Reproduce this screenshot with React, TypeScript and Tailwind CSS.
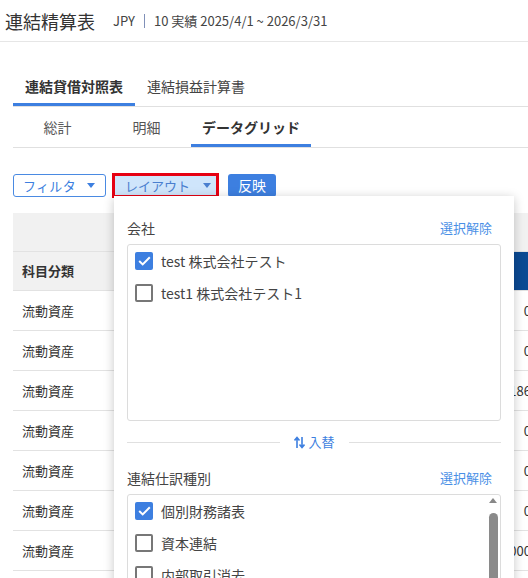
import React from "react";

const Caret = ({ color, ml }: { color: string; ml: string }) => (
  <svg width="8" height="5" viewBox="0 0 8 5" className={ml}>
    <path d="M0 0 L8 0 L4 5 Z" fill={color} />
  </svg>
);

const Check = ({ checked }: { checked: boolean }) =>
  checked ? (
    <div className="w-[18px] h-[18px] rounded-[2px] bg-[#3d7fe0] flex items-center justify-center shrink-0">
      <svg width="13" height="10" viewBox="0 0 13 10">
        <path d="M1.2 5 L4.7 8.4 L11.8 1.3" stroke="#fff" strokeWidth="2" fill="none" />
      </svg>
    </div>
  ) : (
    <div className="w-[18px] h-[18px] rounded-[2px] border-2 border-[#777] shrink-0" />
  );

const Item = ({ checked, label }: { checked: boolean; label: string }) => (
  <div className="flex items-center h-[32px] gap-[8px]">
    <Check checked={checked} />
    <span className="text-[14px] text-[#444]">{label}</span>
  </div>
);

const rows = ["0", "0", "2,186", "0", "0", "0", "10,000"];

export default function App() {
  return (
    <div className="relative w-[528px] h-[578px] overflow-hidden bg-white font-['Noto_Sans_CJK_JP','Noto_Sans',sans-serif] text-[#333]">
      {/* header */}
      <div className="h-[42px] flex items-center pl-[5px] border-b border-[#e6e6e6]">
        <span className="text-[18px] text-[#333] leading-none">連結精算表</span>
        <span className="ml-[18px] text-[13px] text-[#444]">JPY</span>
        <span className="mx-[9px] w-px h-[14px] bg-[#8090b8]" />
        <span className="text-[13px] text-[#444]">10 実績 2025/4/1 ~ 2026/3/31</span>
      </div>

      <div className="pl-[13px]">
        {/* main tabs */}
        <div className="mt-[24px] flex border-b border-[#e0e0e0]">
          <div className="h-[40px] px-[12px] flex items-center text-[14px] font-bold text-[#333] shadow-[inset_0_-3px_0_#3d7fe0]">
            連結貸借対照表
          </div>
          <div className="h-[40px] px-[12px] flex items-center text-[14px] text-[#444]">
            連結損益計算書
          </div>
        </div>
        {/* sub tabs */}
        <div className="flex border-b border-[#e0e0e0]">
          <div className="h-[40px] w-[89px] flex items-center justify-center text-[14px] text-[#555]">総計</div>
          <div className="h-[40px] w-[89px] flex items-center justify-center text-[14px] text-[#555]">明細</div>
          <div className="h-[40px] w-[120px] flex items-center justify-center text-[14px] font-bold text-[#333] shadow-[inset_0_-3px_0_#3d7fe0]">
            データグリッド
          </div>
        </div>

        {/* buttons */}
        <div className="mt-[25px] flex items-center">
          <div className="h-[23px] w-[93px] rounded-[3px] border border-[#4a8ae2] flex items-center pl-[9px] text-[13px] tracking-[0.3px] text-[#3d7fe0]">
            フィルタ
            <Caret color="#3d7fe0" ml="ml-[11px]" />
          </div>
          <div className="ml-[6px] h-[25px] w-[107px] border-[3px] border-[#e60012] bg-[#cfe5fb] flex items-center pl-[10px] text-[13px] text-[#4a7fcf]">
            レイアウト
            <Caret color="#4a7fcf" ml="ml-[13px]" />
          </div>
          <div className="ml-[9px] h-[23px] w-[48px] rounded-[3px] bg-[#3d7fe0] flex items-center justify-center text-[14px] text-white">
            反映
          </div>
        </div>

        {/* table */}
        <div className="mt-[15px] overflow-hidden">
          <div className="flex h-[39px] bg-[#f1f1f1] border-b border-[#e2e2e2]">
            <div className="w-[501px] shrink-0" />
            <div className="w-[60px] shrink-0" />
          </div>
          <div className="flex h-[39px] bg-[#f1f1f1] border-b border-[#e2e2e2]">
            <div className="w-[501px] shrink-0 pl-[9px] flex items-center text-[13px] font-bold text-[#333]">科目分類</div>
            <div className="w-[60px] shrink-0 bg-[#0b4a93]" />
          </div>
          {rows.map((v, i) => (
            <div key={i} className="flex h-[40px] border-b border-[#e2e2e2]">
              <div className="w-[501px] shrink-0 pl-[9px] flex items-center text-[13px] text-[#333]">流動資産</div>
              <div className="w-[60px] shrink-0 flex items-center justify-end pr-[43px] text-[13px] text-[#333] whitespace-nowrap">
                {v}
              </div>
            </div>
          ))}
        </div>
      </div>

      {/* layout dropdown popup */}
      <div className="absolute left-[114px] top-[196px] w-[400px] h-[420px] bg-white shadow-[0_2px_10px_rgba(0,0,0,0.22)] px-[13px] pt-[22px]">
        <div className="flex items-center justify-between h-[20px]">
          <span className="text-[14px] text-[#444]">会社</span>
          <span className="text-[13px] text-[#4a8fe6] mr-[9px]">選択解除</span>
        </div>
        <div className="mt-[6px] h-[177px] rounded-[3px] border border-[#dcdcdc] px-[7px]">
          <Item checked label="test 株式会社テスト" />
          <Item checked={false} label="test1 株式会社テスト1" />
        </div>

        <div className="mt-[10px] h-[22px] flex items-center">
          <div className="flex-1 h-px bg-[#e0e0e0]" />
          <div className="px-[14px] flex items-center gap-[4px] text-[13px] text-[#3d7fe0]">
            <svg width="11" height="13" viewBox="0 0 11 13">
              <path d="M3 12 L3 2 M0.5 4.5 L3 1.5 L5.5 4.5" stroke="#3d7fe0" strokeWidth="1.6" fill="none" />
              <path d="M8 1 L8 11 M5.5 8.5 L8 11.5 L10.5 8.5" stroke="#3d7fe0" strokeWidth="1.6" fill="none" />
            </svg>
            入替
          </div>
          <div className="flex-1 h-px bg-[#e0e0e0]" />
        </div>

        <div className="mt-[15px] flex items-center justify-between h-[20px]">
          <span className="text-[14px] text-[#444]">連結仕訳種別</span>
          <span className="text-[13px] text-[#4a8fe6] mr-[9px]">選択解除</span>
        </div>
        <div className="mt-[6px] h-[177px] rounded-[3px] border border-[#dcdcdc] flex">
          <div className="flex-1 px-[7px]">
            <Item checked label="個別財務諸表" />
            <Item checked={false} label="資本連結" />
            <Item checked={false} label="内部取引消去" />
          </div>
          <div className="w-[14px] flex flex-col items-center pt-[3px]">
            <svg width="8" height="5" viewBox="0 0 8 5">
              <path d="M0 5 L4 0 L8 5 Z" fill="#888" />
            </svg>
            <div className="mt-[10px] w-[9px] flex-1 rounded-t-[5px] bg-[#8a8a8a]" />
          </div>
        </div>
      </div>
    </div>
  );
}
